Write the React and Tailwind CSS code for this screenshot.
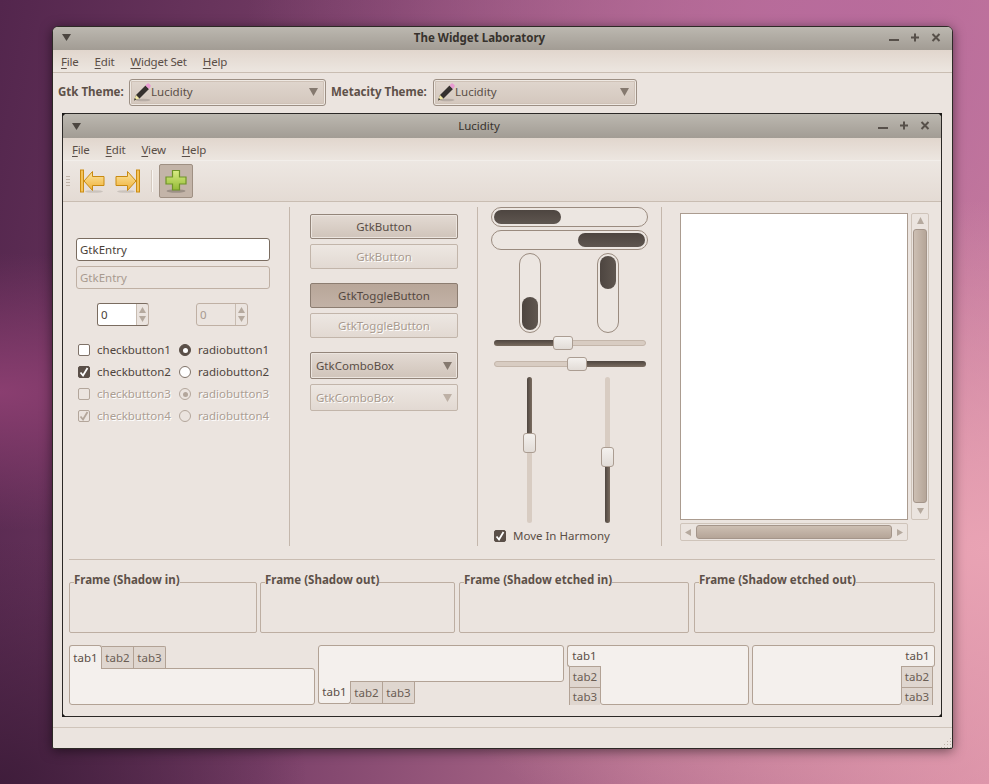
import React from "react";

const Tri = ({ className = "", c = "#6b635c", w = 9, h = 8, dir = "down" }) => {
  const pts = { down: `0,0 ${w},0 ${w / 2},${h}`, up: `0,${h} ${w},${h} ${w / 2},0`, left: `${w},0 ${w},${h} 0,${h / 2}`, right: `0,0 ${w},${h / 2} 0,${h}` }[dir];
  return <svg width={w} height={h} className={className}><polygon points={pts} fill={c} /></svg>;
};

const WinButtons = () => (
  <div className="flex items-center gap-[9px]">
    <svg width="12" height="12"><rect x="1" y="7" width="10" height="2" fill="#57504a" /></svg>
    <svg width="12" height="12"><path d="M6 1.500v8M2 5.500h8" stroke="#57504a" strokeWidth="2" /></svg>
    <svg width="12" height="12"><path d="M2.500 2l7 7M9.500 2l-7 7" stroke="#57504a" strokeWidth="2" /></svg>
  </div>
);

const TitleBar = ({ title, bold, height }) => (
  <div className={`flex items-center justify-between pl-[9px] pr-[10px] bg-gradient-to-b from-[#bcb8b0] to-[#a29c94] ${height}`}>
    <Tri w={9} h={7} c="#4c4640" />
    <span className={`text-[11.5px] ${bold ? "font-bold text-[#37322d]" : "text-[#37322d]"}`}>{title}</span>
    <WinButtons />
  </div>
);

const Menu = ({ items, gapClass, className }) => (
  <div className={`flex items-center text-[11.5px] tracking-[-0.2px] text-[#5a4e46] bg-gradient-to-b from-[#e1d6cd] to-[#ece6e0] ${gapClass} ${className}`}>
    {items.map(([u, r], i) => (
      <span key={i}><span className="underline underline-offset-2">{u}</span>{r}</span>
    ))}
  </div>
);

const Pencil = () => (
  <svg width="18" height="20" viewBox="0 0 18 20" className="shrink-0">
    <ellipse cx="10" cy="18" rx="7.500" ry="1.300" fill="#000" opacity=".14" />
    <path d="M1 18.500l2-5.500L12.500 3.500l3.500 3.500L6.500 16.500z" fill="#35312e" />
    <path d="M1 18.500l2-5.500 3.500 3.500z" fill="#f2e8a6" />
    <path d="M1 18.500l.9-2.400 1.500 1.500z" fill="#333" />
    <path d="M12.500 3.500l1.400-1.600a1.700 1.700 0 0 1 2.400 0l.9.9a1.700 1.700 0 0 1 0 2.400L16 7z" fill="#e99bd2" />
  </svg>
);

const ThemeCombo = ({ w }) => (
  <div className={`flex items-center h-[27px] pl-[3px] pr-[6px] rounded-[3px] border border-[#9c8f84] bg-gradient-to-b from-[#e0d6ce] to-[#d3c7bd] shadow-[inset_0_0_0_1px_#efe9e3,inset_0_0_0_2px_#cfc2b7] ${w}`}>
    <Pencil />
    <span className="text-[11.5px] text-[#5a4e46]">Lucidity</span>
    <Tri className="ml-auto mr-[1px]" w={9} h={8} c="#85796f" />
  </div>
);

const ArrowLeft = () => (
  <svg width="25" height="24" viewBox="0 0 25 24">
    <defs><linearGradient id="ga" x1="0" y1="0" x2="0" y2="1"><stop offset="0" stopColor="#fce6a4" /><stop offset="1" stopColor="#efb035" /></linearGradient></defs>
    <ellipse cx="14" cy="22.500" rx="9" ry="1.300" fill="#000" opacity=".12" />
    <path d="M4 12L12.500 2.500v5h11.500v9H12.500v5z" fill="url(#ga)" stroke="#c98a10" />
    <rect x="0.500" y="1" width="3" height="22" fill="#f3c35a" stroke="#cc8c12" strokeWidth="1" />
  </svg>
);
const ArrowRight = () => (
  <svg width="25" height="24" viewBox="0 0 25 24">
    <ellipse cx="11" cy="22.500" rx="9" ry="1.300" fill="#000" opacity=".12" />
    <path d="M21 12L12.500 2.500v5H1v9h11.500v5z" fill="url(#ga)" stroke="#c98a10" />
    <rect x="21.500" y="1" width="3" height="22" fill="#f3c35a" stroke="#cc8c12" strokeWidth="1" />
  </svg>
);
const Plus = () => (
  <svg width="22" height="24" viewBox="0 0 22 24">
    <defs><linearGradient id="gp" x1="0" y1="0" x2="0" y2="1"><stop offset="0" stopColor="#d9ec84" /><stop offset="1" stopColor="#93ba36" /></linearGradient></defs>
    <ellipse cx="11" cy="22" rx="9.500" ry="1.700" fill="#000" opacity=".2" />
    <path d="M7.500 1.500h7v6.500h6.500v7h-6.500v6h-7v-6H1V8h6.500z" fill="url(#gp)" stroke="#6f9328" strokeWidth="1.200" />
  </svg>
);

const Entry = ({ disabled }) => (
  <div className={`flex items-center h-[23px] w-[194px] px-[3px] rounded-[3px] text-[11.5px] ${disabled ? "border border-[#bfb0a4] text-[#a89a8f]" : "border border-[#7a6c60] bg-white text-[#4a3f38]"}`}>GtkEntry</div>
);

const Spin = ({ disabled, className = "" }) => (
  <div className={`flex h-[23px] w-[52px] rounded-[3px] border ${disabled ? "border-[#bfb0a4]" : "border-[#7a6c60] border-r-[#bfb0a4]"} ${className}`}>
    <div className={`flex-1 flex items-center pl-[3px] text-[11.5px] rounded-l-[2px] ${disabled ? "text-[#a89a8f]" : "bg-white text-[#4a3f38]"}`}>0</div>
    <div className="w-[12px] flex flex-col items-center justify-around border-l border-[#c8bcb1] py-[1px]">
      <Tri dir="up" w={7} h={6} c="#b5a99e" />
      <Tri dir="down" w={7} h={6} c="#b5a99e" />
    </div>
  </div>
);

const Check = ({ on, disabled, className = "" }) => (
  <div className={`flex items-center justify-center w-[12px] h-[12px] rounded-[2px] border ${disabled ? "border-[#b3a69b]" : on ? "border-[#5a4f48] bg-[#5a4f48]" : "border-[#7f7268] bg-white"} ${className}`}>
    {on && <svg width="10" height="10" viewBox="0 0 10 10"><path d="M1.500 5.500l2.500 3L8.500 1" fill="none" stroke={disabled ? "#b3a69b" : "#fff"} strokeWidth="1.800" /></svg>}
  </div>
);

const Radio = ({ on, disabled }) => (
  <div className={`flex items-center justify-center w-[12px] h-[12px] rounded-full border ${disabled ? "border-[#b3a69b]" : on ? "border-[#5a4f48] bg-[#5a4f48]" : "border-[#7f7268] bg-white"}`}>
    {on && <div className={`w-[5px] h-[5px] rounded-full ${disabled ? "bg-[#b3a69b]" : "bg-white"}`} />}
  </div>
);

const CheckRow = ({ n, on, rOn, disabled }) => {
  const t = disabled ? "text-[#ab9e93] [text-shadow:1px_1px_0_#fff]" : "text-[#4f443d]";
  return (
    <div className={`flex items-center h-[22px] text-[11.5px] ${t}`}>
      <Check on={on} disabled={disabled} className="ml-[2px]" />
      <span className="ml-[7px] w-[82px]">checkbutton{n}</span>
      <Radio on={rOn} disabled={disabled} />
      <span className="ml-[7px]">radiobutton{n}</span>
    </div>
  );
};

const Btn = ({ children, disabled, active, className = "" }) => {
  const s = disabled
    ? "border-[#c2b5aa] bg-gradient-to-b from-[#ede7e2] to-[#e2d9d2] text-[#a89a8f] [text-shadow:1px_1px_0_#fff]"
    : active
    ? "border-[#8c7d71] bg-gradient-to-b from-[#b8a699] to-[#c2b2a6] text-[#54483f]"
    : "border-[#93857a] bg-gradient-to-b from-[#e3dad3] to-[#d0c4ba] text-[#5a4e46] shadow-[inset_0_0_0_1px_#ece5df]";
  return <div className={`flex items-center w-[148px] rounded-[2px] border text-[11.5px] ${s} ${className}`}>{children}</div>;
};

const HBar = ({ side }) => (
  <div className={`flex h-[20px] w-[157px] p-[2px] rounded-full border border-[#9a8b7f] bg-[#ece6e1] ${side === "right" ? "justify-end" : ""}`}>
    <div className="w-[67px] rounded-full bg-gradient-to-b from-[#4d4540] to-[#5f5650]" />
  </div>
);

const VBar = ({ side }) => (
  <div className={`flex flex-col w-[22px] h-[80px] p-[2px] rounded-full border border-[#9a8b7f] bg-[#ece6e1] ${side === "bottom" ? "justify-end" : ""}`}>
    <div className="h-[33px] rounded-full bg-gradient-to-r from-[#4d4540] to-[#605750]" />
  </div>
);

const handle = "rounded-[3px] border border-[#ab9d92] bg-gradient-to-b from-[#f4f1ee] to-[#e2dcd7]";

const HScale = ({ dark, at, className = "" }) => (
  <div className={`relative flex items-center h-[14px] w-[152px] ml-[3px] ${className}`}>
    <div className={`flex-1 h-[6px] rounded-full ${dark === "left" ? "bg-gradient-to-b from-[#4f4640] to-[#7a6c60]" : "bg-[#d8ccc2] border border-[#c4b6aa]"}`} />
    <div className={`flex-1 h-[6px] rounded-full ${dark === "right" ? "bg-gradient-to-b from-[#4f4640] to-[#7a6c60]" : "bg-[#d8ccc2] border border-[#c4b6aa]"}`} />
    <div className={`absolute top-0 w-[20px] h-[14px] ${handle} ${at}`} />
  </div>
);

const VScale = ({ top, bottom, at }) => (
  <div className="relative flex flex-col items-center w-[14px] h-[146px]">
    <div className={`w-[5px] rounded-t-full ${top}`} />
    <div className={`w-[5px] flex-1 rounded-b-full ${bottom}`} />
    <div className={`absolute left-[1px] w-[13px] h-[20px] ${handle} ${at}`} />
  </div>
);

const Frame = ({ label, w }) => (
  <fieldset className={`h-[61px] rounded-[2px] border border-[#bdaea2] pl-[4px] ${w}`}>
    <legend className="text-[11.5px] font-bold leading-[16px] pb-[4px] text-[#5e5149]">{label}</legend>
  </fieldset>
);

const Tab = ({ label, active, className = "" }) => (
  <div className={`flex items-center justify-center text-[11.5px] ${active ? "bg-[#f4f0ed] text-[#5a4e46]" : "bg-[#dfd6cf] text-[#6a5d54]"} ${className}`}>{label}</div>
);

const Corner = ({ className, pts }) => (
  <svg width="4" height="4" className={`absolute ${className}`}><polygon points={pts} fill="#1c1a18" /></svg>
);

const border = "border-[#b2a295]";

export default function App() {
  return (
    <div className="relative w-[989px] h-[784px] overflow-hidden pt-[26px] pl-[52px] font-['Noto_Sans','Liberation_Sans',sans-serif] bg-[radial-gradient(ellipse_at_100%_70%,#e9a3b4_0%,rgba(233,163,180,0)_45%),radial-gradient(ellipse_at_85%_5%,#b86b9c_0%,rgba(184,107,156,0)_50%),radial-gradient(ellipse_at_0%_100%,#3f1d3b_0%,rgba(63,29,59,0)_22%),radial-gradient(ellipse_at_0%_50%,#8a3e70_0%,rgba(138,62,112,0)_25%),linear-gradient(100deg,#53264d_0%,#7a4069_35%,#b5708f_70%,#d88fa5_100%)]">
      <div className="flex flex-col w-[901px] h-[723px] rounded-t-[6px] rounded-b-[2px] border border-[#2d2926] bg-[#ebe4df] overflow-hidden shadow-[0_2px_12px_rgba(0,0,0,0.5)]">
        <TitleBar title="The Widget Laboratory" bold height="h-[23px] pb-[2px]" />
        <Menu items={[["F", "ile"], ["E", "dit"], ["W", "idget Set"], ["H", "elp"]]} gapClass="gap-[16px]" className="h-[23px] pl-[8px] pt-[2px] border-b border-[#c9bdb2]" />
        <div className="flex items-center h-[40px] pl-[5px] pb-[2px] text-[11.5px] font-bold text-[#5e5149]">
          <span className="w-[67px] whitespace-nowrap">Gtk Theme:</span>
          <div className="ml-[4px] font-normal"><ThemeCombo w="w-[197px]" /></div>
          <span className="ml-[5px] w-[97px] whitespace-nowrap">Metacity Theme:</span>
          <div className="ml-[5px] font-normal"><ThemeCombo w="w-[204px]" /></div>
        </div>

        <div className="relative flex flex-col ml-[9px] w-[880px] h-[604px] border border-[#2b2826]">
          <Corner className="-top-px -left-px" pts="0,0 4,0 0,4" />
          <Corner className="-top-px -right-px" pts="0,0 4,0 4,4" />
          <Corner className="-bottom-px -left-px" pts="0,0 4,4 0,4" />
          <Corner className="-bottom-px -right-px" pts="4,0 4,4 0,4" />
          <TitleBar title="Lucidity" height="h-[24px]" />
          <Menu items={[["F", "ile"], ["E", "dit"], ["V", "iew"], ["H", "elp"]]} gapClass="gap-[16px]" className="h-[23px] pl-[9px] pt-[2px] border-b border-[#f2eeea]" />
          <div className="flex items-center h-[41px] pl-[3px] border-b border-[#c9bdb2] bg-gradient-to-b from-[#ede7e2] to-[#e4dbd4]">
            <div className="flex flex-col gap-[2px] w-[4px]">
              <div className="h-px bg-[#c0b3a8]" /><div className="h-px bg-[#c0b3a8]" /><div className="h-px bg-[#c0b3a8]" /><div className="h-px bg-[#c0b3a8]" />
            </div>
            <div className="ml-[10px]"><ArrowLeft /></div>
            <div className="ml-[10px]"><ArrowRight /></div>
            <div className="ml-[11px] w-[2px] h-[22px] bg-[#f8f5f2] border-l border-[#d5cac0]" />
            <div className="ml-[6px] flex items-center justify-center w-[34px] h-[34px] rounded-[2px] border border-[#9f9083] bg-[#c3b4a8]"><Plus /></div>
          </div>

          <div className="flex h-[345px] pt-[5px]">
            {/* column 1 */}
            <div className="w-[227px] h-[339px] pl-[13px] pt-[31px] border-r border-[#c4b7ac]">
              <Entry />
              <div className="mt-[5px]"><Entry disabled /></div>
              <div className="flex mt-[14px] pl-[21px]">
                <Spin />
                <Spin disabled className="ml-[47px]" />
              </div>
              <div className="mt-[13px]">
                <CheckRow n={1} rOn />
                <CheckRow n={2} on />
                <CheckRow n={3} rOn disabled />
                <CheckRow n={4} on disabled />
              </div>
            </div>
            {/* column 2 */}
            <div className="w-[188px] h-[339px] pl-[20px] pt-[7px] border-r border-[#c4b7ac]">
              <Btn className="h-[25px] justify-center">GtkButton</Btn>
              <Btn disabled className="h-[25px] justify-center mt-[5px]">GtkButton</Btn>
              <Btn active className="h-[25px] justify-center mt-[14px]">GtkToggleButton</Btn>
              <Btn disabled className="h-[25px] justify-center mt-[5px]">GtkToggleButton</Btn>
              <Btn className="h-[27px] mt-[14px] px-[5px] justify-between">GtkComboBox<Tri w={9} h={8} c="#85796f" /></Btn>
              <Btn disabled className="h-[27px] mt-[5px] px-[5px] justify-between">GtkComboBox<Tri w={9} h={8} c="#bdb0a5" /></Btn>
            </div>
            {/* column 3 */}
            <div className="w-[184px] h-[339px] pl-[13px] border-r border-[#c4b7ac]">
              <HBar />
              <div className="mt-[3px]"><HBar side="right" /></div>
              <div className="flex mt-[3px] pl-[28px] gap-[56px]">
                <VBar side="bottom" />
                <VBar />
              </div>
              <HScale dark="left" at="left-[59px]" className="mt-[3px]" />
              <HScale dark="right" at="left-[73px]" className="mt-[7px]" />
              <div className="flex mt-[6px] pl-[31px] gap-[64px]">
                <VScale top="h-[56px] bg-gradient-to-r from-[#4f4640] to-[#7a6c60]" bottom="bg-[#d8ccc2]" at="top-[56px]" />
                <VScale top="h-[70px] bg-[#d8ccc2]" bottom="bg-gradient-to-r from-[#4f4640] to-[#7a6c60]" at="top-[70px]" />
              </div>
              <div className="flex items-center h-[14px] mt-[6px] ml-[3px] text-[11.5px] text-[#5a4e46]">
                <Check on />
                <span className="ml-[7px]">Move In Harmony</span>
              </div>
            </div>
            {/* column 4 */}
            <div className="pl-[18px] pt-[6px]">
              <div className="flex gap-[3px]">
                <div className="w-[228px] h-[307px] border border-[#ab9c90] bg-white" />
                <div className="flex flex-col items-center w-[18px] h-[307px] rounded-[2px] border border-[#cfc4ba] pt-[3px] pb-[5px]">
                  <Tri dir="up" w={7} h={7} c="#b5a99e" />
                  <div className="w-[14px] flex-1 my-[5px] rounded-[3px] border border-[#a4958a] bg-gradient-to-r from-[#cdbfb3] to-[#b5a598]" />
                  <Tri dir="down" w={7} h={6} c="#b5a99e" />
                </div>
              </div>
              <div className="flex items-center w-[228px] h-[18px] mt-[3px] rounded-[2px] border border-[#cfc4ba] px-[4px]">
                <Tri dir="left" w={6} h={7} c="#b5a99e" />
                <div className="flex-1 h-[14px] mx-[5px] rounded-[3px] border border-[#a4958a] bg-gradient-to-b from-[#cdbfb3] to-[#b5a598]" />
                <Tri dir="right" w={6} h={7} c="#b5a99e" />
              </div>
            </div>
          </div>

          <div className="ml-[6px] mt-[12px] w-[866px] h-px bg-[#c9bcb1]" />

          <div className="flex gap-[3px] ml-[6px] mt-[12px]">
            <Frame w="w-[188px]" label="Frame (Shadow in)" />
            <Frame w="w-[195px]" label="Frame (Shadow out)" />
            <Frame w="w-[230px] ml-[1px]" label="Frame (Shadow etched in)" />
            <Frame w="w-[241px] ml-[2px]" label="Frame (Shadow etched out)" />
          </div>

          <div className="flex gap-[3px] ml-[6px] mt-[12px] h-[60px]">
            <div className="flex flex-col w-[246px]">
              <div className="flex items-end h-[23px]">
                <Tab active label="tab1" className={`relative z-10 w-[33px] h-[24px] -mb-px rounded-t-[3px] border border-b-0 ${border}`} />
                <Tab label="tab2" className={`w-[32px] h-[22px] border-t border-r ${border}`} />
                <Tab label="tab3" className={`w-[32px] h-[22px] border-t border-r rounded-tr-[2px] ${border}`} />
              </div>
              <div className={`h-[37px] rounded-[3px] rounded-tl-none border ${border} bg-[#f4f0ed]`} />
            </div>

            <div className="flex flex-col w-[246px]">
              <div className={`h-[37px] rounded-[3px] rounded-bl-none border ${border} bg-[#f4f0ed]`} />
              <div className="flex items-start h-[23px]">
                <Tab active label="tab1" className={`relative z-10 w-[33px] h-[23px] -mt-px rounded-b-[3px] border border-t-0 ${border}`} />
                <Tab label="tab2" className={`w-[32px] h-[22px] border-b border-r ${border}`} />
                <Tab label="tab3" className={`w-[32px] h-[22px] border-b border-r rounded-br-[2px] ${border}`} />
              </div>
            </div>

            <div className="flex w-[182px]">
              <div className="flex flex-col w-[33px]">
                <Tab active label="tab1" className={`relative z-10 w-[34px] h-[24px] rounded-l-[3px] border border-r-0 ${border}`} />
                <Tab label="tab2" className={`ml-[2px] h-[23px] border-l border-b ${border}`} />
                <Tab label="tab3" className={`ml-[2px] h-[19px] border-l ${border}`} />
              </div>
              <div className={`flex-1 h-[60px] rounded-[3px] rounded-tl-none border ${border} bg-[#f4f0ed]`} />
            </div>

            <div className="flex w-[183px]">
              <div className={`flex-1 h-[60px] rounded-[3px] rounded-tr-none border ${border} bg-[#f4f0ed]`} />
              <div className="flex flex-col w-[33px]">
                <Tab active label="tab1" className={`relative z-10 -ml-px w-[34px] h-[24px] rounded-r-[3px] border border-l-0 ${border}`} />
                <Tab label="tab2" className={`mr-[2px] h-[23px] border-r border-b ${border}`} />
                <Tab label="tab3" className={`mr-[2px] h-[19px] border-r ${border}`} />
              </div>
            </div>
          </div>
        </div>

        <div className="relative mt-[10px] flex-1 border-t border-[#cfc4ba]">
          <svg width="12" height="12" className="absolute right-0 bottom-0">
            {[[10, 2], [7, 5], [10, 5], [4, 8], [7, 8], [10, 8], [1, 11], [4, 11], [7, 11], [10, 11]].map(([x, y], i) => (
              <rect key={i} x={x} y={y} width="1" height="1" fill="#bdb1a6" />
            ))}
          </svg>
        </div>
      </div>
    </div>
  );
}
